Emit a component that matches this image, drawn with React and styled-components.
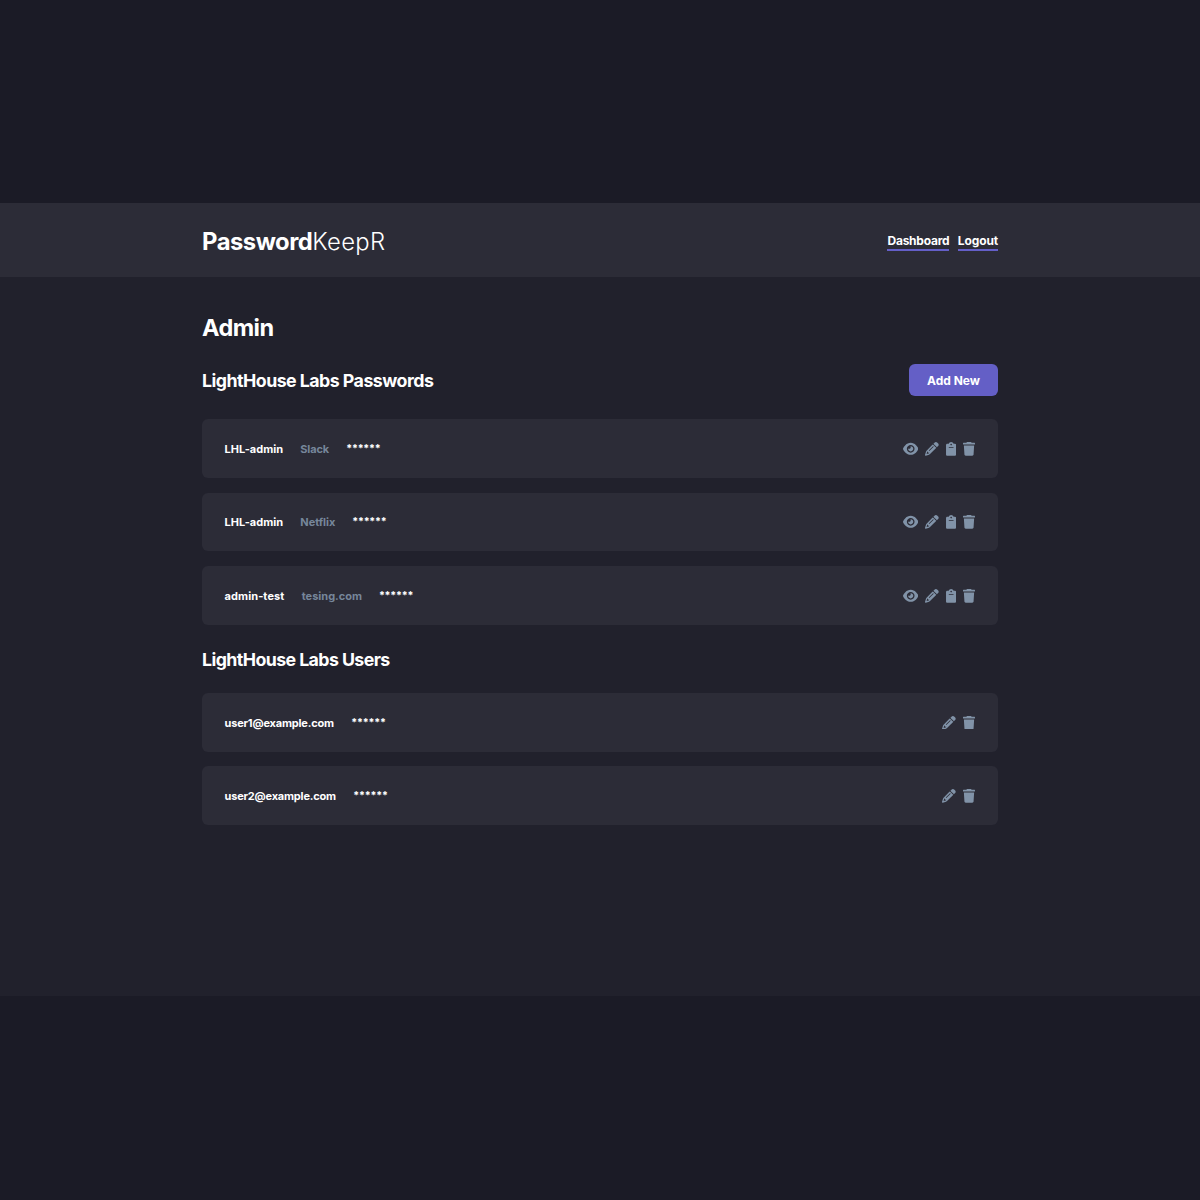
import React from "react";
import styled, { createGlobalStyle } from "styled-components";
import { FaPencil } from "react-icons/fa6";

const Global = createGlobalStyle`
  * { box-sizing: border-box; }
  body {
    margin: 0;
    background: #1b1b26;
    color: #fff;
    font-family: Inter, "Liberation Sans", sans-serif;
    font-weight: 700;
  }
  h1, h2, ul { margin: 0; padding: 0; }
`;

const Screen = styled.div`
  min-height: 1200px;
  padding: 203px 0 204px;
`;

const Page = styled.div`
  height: 793px;
  background: #21212c;
`;

const Container = styled.div`
  width: 796px;
  margin: 0 auto;
`;

const Header = styled.header`
  height: 74px;
  background: #2c2c37;
`;

const HeaderInner = styled(Container)`
  height: 100%;
  display: flex;
  align-items: center;
  justify-content: space-between;
`;

const Logo = styled.div`
  display: flex;
  font-size: 23.8px;
  line-height: 30px;
  padding-top: 4px;
`;

const LogoStrong = styled.span`
  font-weight: 700;
  letter-spacing: -0.48px;
`;

const LogoLight = styled.span`
  font-weight: 300;
  letter-spacing: 0.3px;
`;

const Nav = styled.nav`
  display: flex;
  gap: 8.5px;
  padding-top: 2px;
`;

const NavLink = styled.a`
  height: 19px;
  font-size: 12px;
  line-height: 18px;
  letter-spacing: ${(p) => p.$spacing}px;
  border-bottom: 2px solid #645fc8;
`;

const Title = styled.h1`
  padding-top: 35px;
  font-size: 23.5px;
  line-height: 32px;
  font-weight: 650;
  letter-spacing: -0.55px;
`;

const SectionHead = styled.div`
  height: 32.5px;
  margin: ${(p) => p.$margin};
  display: flex;
  align-items: center;
  justify-content: space-between;
`;

const Heading = styled.h2`
  padding-top: 2px;
  font-size: 17.8px;
  line-height: 24px;
  font-weight: 650;
  letter-spacing: ${(p) => p.$spacing}px;
`;

const AddButton = styled.button`
  width: 89px;
  height: 32.5px;
  padding: 0;
  border: 0;
  border-radius: 6px;
  background: #645fc6;
  color: #fff;
  font: 700 12px/33px Inter, "Liberation Sans", sans-serif;
`;

const List = styled.ul`
  list-style: none;
  display: grid;
  gap: 14.9px;
`;

const Card = styled.li`
  height: 58.6px;
  padding: 0 23px 0 22.5px;
  border-radius: 6px;
  background: #2c2c37;
  display: flex;
  align-items: center;
  justify-content: space-between;
`;

const Fields = styled.div`
  display: flex;
  align-items: center;
  gap: 17px;
  padding-top: 0.8px;
  font-size: 11px;
  line-height: 16px;
`;

const Field = styled.span`
  width: ${(p) => p.$width}px;
  white-space: nowrap;
  letter-spacing: ${(p) => p.$spacing || 0}px;
  color: ${(p) => (p.$muted ? "#76869a" : "#fff")};
`;

const Mask = styled.span`
  font-size: 10.6px;
  letter-spacing: -0.2px;
`;

const Actions = styled.div`
  display: flex;
  align-items: center;
  gap: 7px;
  padding-top: 0.6px;
  color: #8193a8;
  font-size: 13.7px;

  svg {
    display: block;
    flex: none;
    height: 1em;
  }
`;

const Eye = () => (
  <svg viewBox="0 0 576 512" width="15.4" fill="currentColor">
    <path d="M279.6 160.4C282.4 160.1 285.2 160 288 160C341 160 384 202.1 384 256C384 309 341 352 288 352C234.1 352 192 309 192 256C192 253.2 192.1 250.4 192.4 247.6C201.7 252.1 212.5 256 224 256C259.3 256 288 227.3 288 192C288 180.5 284.1 169.7 279.6 160.4zM480.6 112.6C527.4 156 558.7 207.1 573.5 243.7C576.8 251.6 576.8 260.4 573.5 268.3C558.7 304 527.4 355.1 480.6 399.4C433.5 443.2 368.8 480 288 480C207.2 480 142.5 443.2 95.42 399.4C48.62 355.1 17.34 304 2.461 268.3C-.8205 260.4-.8205 251.6 2.461 243.7C17.34 207.1 48.62 156 95.42 112.6C142.5 68.84 207.2 32 288 32C368.8 32 433.5 68.84 480.6 112.6V112.6zM288 112C208.5 112 144 176.5 144 256C144 335.5 208.5 400 288 400C367.5 400 432 335.5 432 256C432 176.5 367.5 112 288 112z" />
  </svg>
);

const Clipboard = () => (
  <svg viewBox="0 0 384 512" width="10.3" fill="currentColor">
    <path d="M336 64h-53.88C268.9 26.8 233.7 0 192 0S115.1 26.8 101.9 64H48C21.5 64 0 85.48 0 112v352C0 490.5 21.5 512 48 512h288c26.5 0 48-21.48 48-48v-352C384 85.48 362.5 64 336 64zM192 64c17.67 0 32 14.33 32 32s-14.33 32-32 32S160 113.7 160 96S174.3 64 192 64zM272 224h-160C103.2 224 96 216.8 96 208C96 199.2 103.2 192 112 192h160C280.8 192 288 199.2 288 208S280.8 224 272 224z" />
  </svg>
);

const Trash = () => (
  <svg viewBox="0 0 448 512" width="12" fill="currentColor">
    <path d="M53.21 467c1.562 24.84 23.02 45 47.9 45h245.8c24.88 0 46.33-20.16 47.9-45L416 128H32L53.21 467zM432 32H320l-11.58-23.16c-2.709-5.42-8.25-8.844-14.31-8.844H153.9c-6.061 0-11.6 3.424-14.31 8.844L128 32H16c-8.836 0-16 7.162-16 16V80c0 8.836 7.164 16 16 16h416c8.838 0 16-7.164 16-16V48C448 39.16 440.8 32 432 32z" />
  </svg>
);

const passwords = [
  { user: "LHL-admin", userWidth: 58.8, userSpacing: 0.03, site: "Slack", siteWidth: 28.9, siteSpacing: -0.15 },
  { user: "LHL-admin", userWidth: 58.8, userSpacing: 0.03, site: "Netflix", siteWidth: 34.9, siteSpacing: -0.05 },
  { user: "admin-test", userWidth: 60.2, userSpacing: 0.09, site: "tesing.com", siteWidth: 60.2, siteSpacing: 0 },
];

const users = [
  { email: "user1@example.com", width: 109.8, spacing: -0.18 },
  { email: "user2@example.com", width: 111.8, spacing: -0.19 },
];

export default function App() {
  return (
    <Screen>
      <Global />
      <Page>
        <Header>
          <HeaderInner>
            <Logo>
              <LogoStrong>Password</LogoStrong>
              <LogoLight>KeepR</LogoLight>
            </Logo>
            <Nav>
              <NavLink $spacing={-0.24}>Dashboard</NavLink>
              <NavLink $spacing={-0.13}>Logout</NavLink>
            </Nav>
          </HeaderInner>
        </Header>
        <Container>
          <Title>Admin</Title>
          <SectionHead $margin="19.5px 0 23.2px">
            <Heading $spacing={-0.54}>LightHouse Labs Passwords</Heading>
            <AddButton>Add New</AddButton>
          </SectionHead>
          <List>
            {passwords.map((p) => (
              <Card key={p.site}>
                <Fields>
                  <Field $width={p.userWidth} $spacing={p.userSpacing}>{p.user}</Field>
                  <Field $muted $width={p.siteWidth} $spacing={p.siteSpacing}>{p.site}</Field>
                  <Mask>******</Mask>
                </Fields>
                <Actions>
                  <Eye />
                  <FaPencil />
                  <Clipboard />
                  <Trash />
                </Actions>
              </Card>
            ))}
          </List>
          <SectionHead $margin="17.7px 0 18px">
            <Heading $spacing={-0.6}>LightHouse Labs Users</Heading>
          </SectionHead>
          <List>
            {users.map((u) => (
              <Card key={u.email}>
                <Fields>
                  <Field $width={u.width} $spacing={u.spacing}>{u.email}</Field>
                  <Mask>******</Mask>
                </Fields>
                <Actions>
                  <FaPencil />
                  <Trash />
                </Actions>
              </Card>
            ))}
          </List>
        </Container>
      </Page>
    </Screen>
  );
}
